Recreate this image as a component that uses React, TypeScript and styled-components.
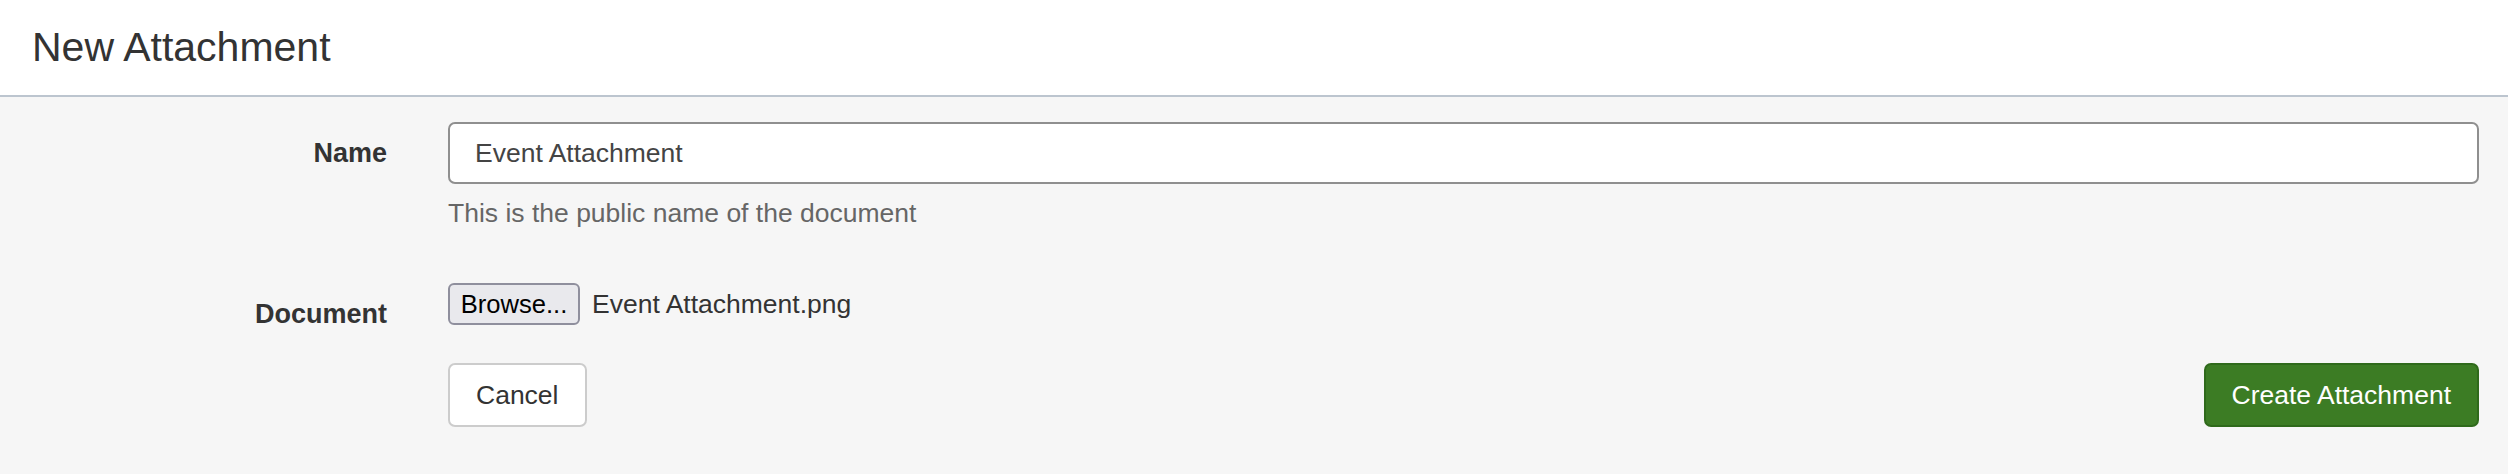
import React from "react";
import styled, { createGlobalStyle } from "styled-components";

const GlobalStyle = createGlobalStyle`
  html, body {
    margin: 0;
    padding: 0;
    background: #f6f6f6;
  }
  body {
    font-family: "Liberation Sans", Arial, sans-serif;
    color: #333;
  }
  * { box-sizing: border-box; }
`;

const Page = styled.div`
  width: 100%;
  min-height: 474px;
  background: #f6f6f6;
`;

const Header = styled.header`
  height: 97px;
  background: #ffffff;
  border-bottom: 2px solid #bcc5cf;
  display: flex;
  align-items: center;
  padding-left: 32px;
`;

const Title = styled.h1`
  margin: 0;
  font-size: 41px;
  font-weight: 400;
  line-height: 95px;
  color: #333;
`;

const Form = styled.form`
  padding: 25px 29px 0 0;
  display: flex;
  flex-direction: column;
`;

const Row = styled.div<{ $mt?: number }>`
  display: grid;
  grid-template-columns: 387px 1fr;
  column-gap: 61px;
  margin-top: ${(p) => p.$mt ?? 0}px;
`;

const Label = styled.label`
  text-align: right;
  font-weight: 700;
  font-size: 27px;
  line-height: 62px;
  color: #333;
`;

const Field = styled.div`
  display: flex;
  flex-direction: column;
`;

const TextInput = styled.input`
  height: 62px;
  width: 100%;
  border: 2px solid #8f8f8f;
  border-radius: 7px;
  padding: 0 25px;
  font-family: "Liberation Sans", Arial, sans-serif;
  font-size: 26.5px;
  color: #444;
  background: #fff;
  outline: none;
`;

const Help = styled.div`
  margin-top: 9px;
  font-size: 26.5px;
  line-height: 40px;
  color: #666;
`;

const FileRow = styled.div`
  display: flex;
  align-items: center;
  height: 42px;
  gap: 12px;
`;

const BrowseButton = styled.button`
  height: 42px;
  width: 132px;
  padding: 0;
  border: 2px solid #8f8f9d;
  border-radius: 6px;
  background: #e9e9ed;
  font-family: "Liberation Sans", Arial, sans-serif;
  font-size: 25.6px;
  color: #000;
`;

const FileName = styled.span`
  font-size: 26.5px;
  color: #333;
`;

const Actions = styled.div`
  display: flex;
  justify-content: space-between;
  align-items: flex-start;
`;

const Button = styled.button<{ $primary?: boolean }>`
  height: 64px;
  padding: 0 26px;
  border-radius: 7px;
  font-family: "Liberation Sans", Arial, sans-serif;
  font-size: 26.5px;
  cursor: pointer;
  border: 2px solid ${(p) => (p.$primary ? "#2f6a1b" : "#cccccc")};
  background: ${(p) => (p.$primary ? "#3c7c24" : "#ffffff")};
  color: ${(p) => (p.$primary ? "#ffffff" : "#333333")};
`;

export default function App() {
  return (
    <>
      <GlobalStyle />
      <Page>
        <Header>
          <Title>New Attachment</Title>
        </Header>
        <Form onSubmit={(e) => e.preventDefault()}>
          <Row>
            <Label htmlFor="name">Name</Label>
            <Field>
              <TextInput id="name" defaultValue="Event Attachment" />
              <Help>This is the public name of the document</Help>
            </Field>
          </Row>
          <Row $mt={50}>
            <Label>Document</Label>
            <Field>
              <FileRow>
                <BrowseButton type="button">Browse...</BrowseButton>
                <FileName>Event Attachment.png</FileName>
              </FileRow>
            </Field>
          </Row>
          <Row $mt={18}>
            <div />
            <Actions>
              <Button type="button">Cancel</Button>
              <Button type="submit" $primary>
                Create Attachment
              </Button>
            </Actions>
          </Row>
        </Form>
      </Page>
    </>
  );
}
